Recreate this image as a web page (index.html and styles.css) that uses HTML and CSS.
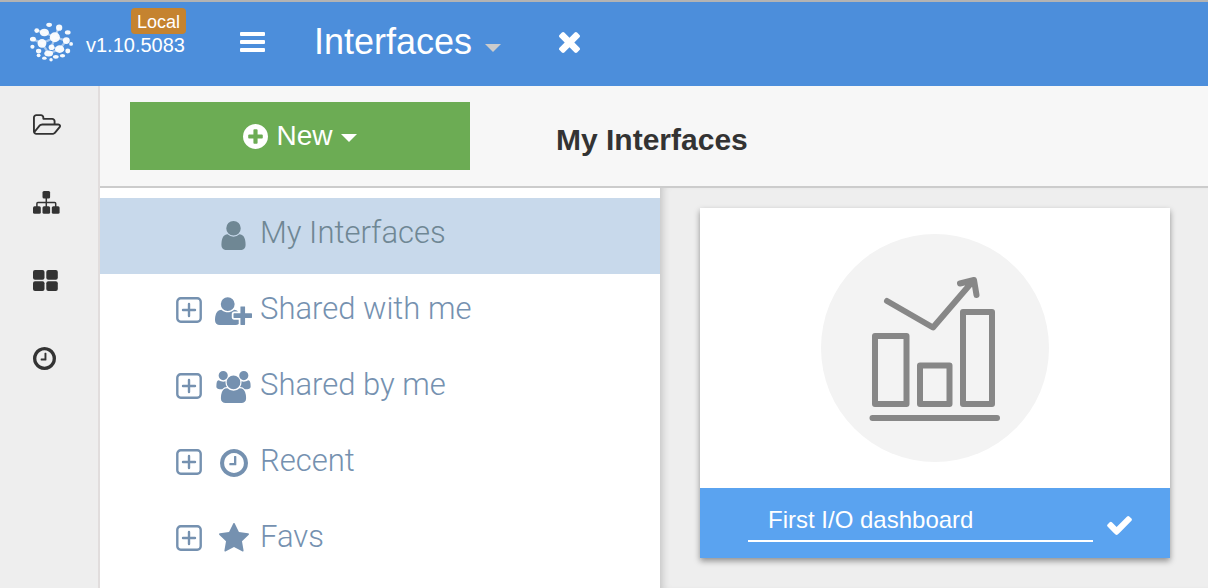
FILE: index.html
```html
<!DOCTYPE html>
<html lang="en">
<head>
<meta charset="utf-8">
<title>Interfaces</title>
<link rel="stylesheet" href="styles.css">
</head>
<body>
<svg class="sprite" aria-hidden="true">
  <symbol id="clock" viewBox="128 128 1536 1536"><path d="M1024 544v448q0 14-9 23t-23 9h-320q-14 0-23-9t-9-23v-64q0-14 9-23t23-9h224v-352q0-14 9-23t23-9h64q14 0 23 9t9 23zm416 352q0-148-73-273t-198-198-273-73-273 73-198 198-73 273 73 273 198 198 273 73 273-73 198-198 73-273zm224 0q0 209-103 385.5t-279.5 279.5-385.5 103-385.5-103-279.5-279.5-103-385.5 103-385.5 279.5-279.5 385.5-103 385.5 103 279.5 279.5 103 385.5z"/></symbol>
  <symbol id="expand" viewBox="0 0 26 26"><rect x="1.3" y="1.3" width="23.4" height="23.4" rx="3.4" fill="none" stroke="currentColor" stroke-width="2.4"/><path d="M13 7v12M7 13h12" stroke="currentColor" stroke-width="2.4" stroke-linecap="round"/></symbol>
</svg>
<header class="topbar">
  <a class="brand" href="#" aria-label="Home">
    <svg class="logo" viewBox="0 0 44 44" fill="currentColor">
      <g opacity=".95"><ellipse cx="19" cy="4" rx="3" ry="2.2"/><circle cx="29.500" cy="7" r="3.300"/><circle cx="6" cy="10" r="2.500"/><ellipse cx="14" cy="12" rx="4.800" ry="4"/><circle cx="25" cy="17" r="5.300"/><ellipse cx="38.500" cy="12" rx="3" ry="2.200"/><circle cx="37" cy="20.500" r="3.600"/><ellipse cx="2" cy="19" rx="3.200" ry="2.600"/><circle cx="11.500" cy="23.500" r="4.600"/><ellipse cx="1.500" cy="27" rx="2.200" ry="2"/><circle cx="21.500" cy="27.500" r="3"/><ellipse cx="30" cy="29.500" rx="4.800" ry="4"/><circle cx="42" cy="24" r="2"/><circle cx="38.500" cy="31.500" r="2.600"/><ellipse cx="8" cy="31.500" rx="2.800" ry="2.400"/><ellipse cx="18.500" cy="34" rx="4.600" ry="3.200"/><circle cx="8" cy="36" r="2"/><ellipse cx="26" cy="37.500" rx="3" ry="2"/><ellipse cx="33" cy="36.500" rx="2.800" ry="1.800"/><ellipse cx="14" cy="39" rx="2.400" ry="1.700"/><circle cx="21" cy="40.500" r="1.800"/></g>
      <path d="M14 12l11 5 12 3.500M25 17l4-10M11.500 23.500L25 17M30 29.500l7-9M18.500 34l11.500-4.500M11.500 23.500l7 10.500M2 19l9.500 4.500M6 10l8 2M21.500 27.500L25 17M21.500 27.500l8.500 2" fill="none" stroke="currentColor" stroke-width="2.400" opacity=".5"/>
    </svg>
    <span class="release"><span class="badge">Local</span><span class="version">v1.10.5083</span></span>
  </a>
  <button class="icon-button menu" aria-label="Menu"><svg class="icon-menu" viewBox="0 0 25 20" fill="currentColor"><rect width="25" height="4" rx="1"/><rect y="8" width="25" height="4" rx="1"/><rect y="16" width="25" height="4" rx="1"/></svg></button>
  <button class="section">Interfaces<span class="caret caret-muted"></span></button>
  <button class="icon-button" aria-label="Close"><svg class="icon-close" viewBox="302 302 1188 1188" fill="currentColor"><path d="M1490 1258q0 40-28 68l-136 136q-28 28-68 28t-68-28l-294-294-294 294q-28 28-68 28t-68-28l-136-136q-28-28-28-68t28-68l294-294-294-294q-28-28-28-68t28-68l136-136q28-28 68-28t68 28l294 294 294-294q28-28 68-28t68 28l136 136q28 28 28 68t-28 68l-294 294 294 294q28 28 28 68z"/></svg></button>
</header>
<div class="shell">
  <nav class="rail" aria-label="Main">
    <a href="#" aria-label="Files"><svg class="rail-folder" viewBox="64 128 1909 1408"><path d="M1845 931q0-35-53-35h-1088q-40 0-85.500 21.500t-71.500 52.500l-294 363q-18 24-18 40 0 35 53 35h1088q40 0 86-22t71-53l294-363q18-22 18-39zm-1141-163h768v-160q0-40-28-68t-68-28h-576q-40 0-68-28t-28-68v-64q0-40-28-68t-68-28h-320q-40 0-68 28t-28 68v853l256-315q44-53 116-87.500t140-34.500zm1269 163q0 62-46 120l-295 363q-43 53-116 87.500t-140 34.500h-1088q-92 0-158-66t-66-158v-960q0-92 66-158t158-66h320q92 0 158 66t66 158v32h544q92 0 158 66t66 158v160h192q54 0 99 24.500t67 70.500q15 32 15 68z"/></svg></a>
    <a href="#" aria-label="Structure"><svg class="rail-sitemap" viewBox="0 0 27 23"><rect x="9.500" width="7.600" height="7.600" rx="1.500"/><rect y="15.200" width="7.800" height="7.600" rx="1.500"/><rect x="9.500" y="15.200" width="7.600" height="7.600" rx="1.500"/><rect x="18.800" y="15.200" width="7.800" height="7.600" rx="1.500"/><path d="M13.300 7v9M3.900 16v-3.600q0-1 1-1h16.800q1 0 1 1V16" fill="none" stroke="currentColor" stroke-width="1.500"/></svg></a>
    <a href="#" aria-label="Interfaces"><svg class="rail-grid" viewBox="0 0 25 21"><rect width="11.500" height="9.700" rx="2"/><rect x="13.300" width="11.500" height="9.700" rx="2"/><rect y="11.300" width="11.500" height="9.700" rx="2"/><rect x="13.300" y="11.300" width="11.500" height="9.700" rx="2"/></svg></a>
    <a href="#" aria-label="History"><svg class="rail-clock"><use href="#clock"/></svg></a>
  </nav>
  <div class="workspace">
    <div class="toolbar">
      <button class="new"><svg class="icon-plus" viewBox="128 128 1536 1536" fill="currentColor"><path d="M1344 960v-128q0-26-19-45t-45-19h-256v-256q0-26-19-45t-45-19h-128q-26 0-45 19t-19 45v256h-256q-26 0-45 19t-19 45v128q0 26 19 45t45 19h256v256q0 26 19 45t45 19h128q26 0 45-19t19-45v-256h256q26 0 45-19t19-45zm320-64q0 209-103 385.500t-279.500 279.500-385.500 103-385.500-103-279.500-279.500-103-385.500 103-385.500 279.500-279.500 385.500-103 385.500 103 279.500 279.500 103 385.500z"/></svg><span>New</span><span class="caret"></span></button>
      <h1 class="title">My Interfaces</h1>
    </div>
    <div class="content">
      <ul class="tree">
        <li class="row selected"><span class="toggle"></span><a class="node" href="#"><span class="glyph"><svg class="glyph-user" viewBox="256 128 1280 1536"><path d="M1536 1399q0 109-62.500 187t-150.500 78h-854q-88 0-150.500-78t-62.500-187q0-85 8.500-160.500t31.500-152 58.500-131 94-89 134.500-34.500q131 128 313 128t313-128q76 0 134.500 34.500t94 89 58.500 131 31.500 152 8.500 160.500zm-256-887q0 159-112.500 271.500t-271.500 112.500-271.500-112.500-112.500-271.500 112.500-271.500 271.500-112.500 271.500 112.500 112.500 271.500z"/></svg></span><span class="label">My Interfaces</span></a></li>
        <li class="row"><button class="toggle" aria-label="Expand Shared with me"><svg><use href="#expand"/></svg></button><a class="node" href="#"><span class="glyph"><svg class="glyph-plus" viewBox="0 128 2048 1536"><path d="M704 896q-159 0-271.500-112.500t-112.500-271.500 112.500-271.500 271.500-112.500 271.500 112.500 112.500 271.500-112.500 271.500-271.500 112.500zm960 128h352q13 0 22.500 9.500t9.500 22.500v192q0 13-9.500 22.500t-22.500 9.500h-352v352q0 13-9.500 22.500t-22.500 9.500h-192q-13 0-22.500-9.500t-9.500-22.500v-352h-352q-13 0-22.500-9.500t-9.500-22.500v-192q0-13 9.500-22.500t22.500-9.500h352v-352q0-13 9.500-22.500t22.500-9.500h192q13 0 22.500 9.500t9.500 22.500v352zm-736 224q0 52 38 90t90 38h256v238q-68 50-171 50h-874q-121 0-194-69t-73-190q0-53 3.500-103.500t14-109 26.500-108.500 43-97.500 62-81 85.500-53.500 111.500-20q19 0 39 17 79 61 154.500 91.500t164.500 30.500 164.500-30.500 154.500-91.500q20-17 39-17 132 0 217 96h-223q-52 0-90 38t-38 90v192z"/></svg></span><span class="label">Shared with me</span></a></li>
        <li class="row"><button class="toggle" aria-label="Expand Shared by me"><svg><use href="#expand"/></svg></button><a class="node" href="#"><span class="glyph"><svg class="glyph-group" viewBox="0 0 1920 1792"><path d="M593 896q-162 5-265 128h-134q-82 0-138-40.500t-56-118.500q0-353 124-353 6 0 43.500 21t97.500 42.500 119 21.500q67 0 133-23-5 37-5 66 0 139 81 256zm1071 637q0 120-73 189.500t-194 69.500h-874q-121 0-194-69.500t-73-189.500q0-53 3.500-103.500t14-109 26.500-108.500 43-97.500 62-81 85.500-53.500 111.500-20q10 0 43 21.500t73 48 107 48 135 21.500 135-21.500 107-48 73-48 43-21.500q61 0 111.500 20t85.500 53.500 62 81 43 97.500 26.500 108.500 14 109 3.500 103.500zm-1024-1277q0 106-75 181t-181 75-181-75-75-181 75-181 181-75 181 75 75 181zm704 384q0 159-112.500 271.500t-271.500 112.500-271.500-112.500-112.500-271.500 112.500-271.500 271.500-112.500 271.500 112.500 112.500 271.500zm576 225q0 78-56 118.500t-138 40.500h-134q-103-123-265-128 81-117 81-256 0-29-5-66 66 23 133 23 59 0 119-21.500t97.500-42.500 43.500-21q124 0 124 353zm-128-609q0 106-75 181t-181 75-181-75-75-181 75-181 181-75 181 75 75 181z"/></svg></span><span class="label">Shared by me</span></a></li>
        <li class="row"><button class="toggle" aria-label="Expand Recent"><svg><use href="#expand"/></svg></button><a class="node" href="#"><span class="glyph"><svg class="glyph-clock"><use href="#clock"/></svg></span><span class="label">Recent</span></a></li>
        <li class="row"><button class="toggle" aria-label="Expand Favs"><svg><use href="#expand"/></svg></button><a class="node" href="#"><span class="glyph"><svg class="glyph-star" viewBox="64 59 1664 1560"><path d="M1728 647q0 22-26 48l-363 354 86 500q1 7 1 20 0 21-10.500 35.500t-30.500 14.500q-19 0-40-12l-449-236-449 236q-22 12-40 12-21 0-31.500-14.500t-10.500-35.500q0-6 2-20l86-500-364-354q-25-27-25-48 0-37 56-46l502-73 225-455q19-41 49-41t49 41l225 455 502 73q56 9 56 46z"/></svg></span><span class="label">Favs</span></a></li>
      </ul>
      <main class="gallery">
        <article class="card">
          <div class="preview">
            <svg class="chart" viewBox="0 0 228 228" fill="none" stroke="#878787" stroke-width="6" stroke-linejoin="round" stroke-linecap="round"><circle cx="114" cy="114" r="114" fill="#f3f3f3" stroke="none"/><path d="M54 102h31.500v68H54zM99 131.500h29.500V170H99zM142 78h29v92h-29zM51.500 184H176M66 67l46 26.500L152 47M139 49.500l14-3.500 2.500 15"/></svg>
          </div>
          <form class="card-footer">
            <input class="name" type="text" value="First I/O dashboard" aria-label="Interface name">
            <button class="confirm" type="button" aria-label="Save name"><svg viewBox="121 334 1550 1188" fill="currentColor"><path d="M1671 566q0 40-28 68l-724 724-136 136q-28 28-68 28t-68-28l-136-136-362-362q-28-28-28-68t28-68l136-136q28-28 68-28t68 28l294 295 656-657q28-28 68-28t68 28l136 136q28 28 28 68z"/></svg></button>
          </form>
        </article>
      </main>
    </div>
  </div>
</div>
</body>
</html>
```
FILE: styles.css
```css
* { box-sizing: border-box; }
body {
  margin: 0;
  min-height: 100vh;
  display: flex;
  flex-direction: column;
  font-family: "Liberation Sans", Arial, sans-serif;
  color: #333;
  background: #eee;
}
button {
  margin: 0;
  padding: 0;
  border: 0;
  background: none;
  color: inherit;
  font: inherit;
  cursor: pointer;
}
a { color: inherit; text-decoration: none; }
svg { display: block; flex: none; }
.sprite { position: absolute; width: 0; height: 0; }

.topbar {
  display: flex;
  align-items: center;
  height: 86px;
  padding: 0 30px 4px;
  border-top: 2px solid #b3b3b3;
  background: #4c8edb;
  color: #fff;
}
.brand { display: flex; align-items: center; gap: 12px; }
.logo { width: 44px; height: 42px; }
.release {
  display: flex;
  flex-direction: column;
  align-items: flex-end;
  padding-bottom: 20px;
}
.badge {
  padding: 4px 6px 2px;
  margin-right: -1px;
  border-radius: 4px;
  background: #c5832f;
  font-size: 18px;
  line-height: 20px;
}
.version { font-size: 20px; line-height: 22px; }
.icon-button { display: flex; }
.menu { margin-left: 55px; }
.icon-menu { width: 25px; height: 20px; }
.section {
  display: flex;
  align-items: center;
  gap: 13px;
  margin: 0 58px 0 49px;
  font-size: 36px;
  line-height: 42px;
}
.icon-close { width: 21px; height: 21px; }
.caret {
  border: 8px solid transparent;
  border-top-color: #fff;
  border-bottom: 0;
}
.caret-muted { margin-top: 12px; border-top-color: #ccc; }

.shell { flex: 1; display: flex; }
.rail {
  flex: none;
  width: 100px;
  border-right: 2px solid #e1dddd;
}
.rail a {
  display: flex;
  align-items: center;
  height: 78px;
  padding: 0 0 2px 33px;
}
.rail svg, .glyph svg { fill: currentColor; }
.rail-folder { width: 28px; height: 21px; }
.rail-sitemap { width: 27px; height: 23px; }
.rail-grid { width: 25px; height: 21px; }
.rail-clock { width: 23px; height: 23px; }

.workspace { flex: 1; min-width: 0; display: flex; flex-direction: column; }
.toolbar {
  display: flex;
  align-items: center;
  gap: 86px;
  height: 102px;
  padding: 0 30px;
  border-bottom: 2px solid #ccc;
  background: #f7f7f7;
}
.new {
  display: flex;
  align-items: center;
  justify-content: center;
  gap: 8px;
  width: 340px;
  height: 68px;
  background: #6cac54;
  color: #fff;
  font-size: 28px;
}
.icon-plus { width: 25px; height: 25px; }
.new .caret { margin-top: 4px; }
.title { margin: 8px 0 0; font-size: 30px; line-height: 36px; }

.content { flex: 1; display: flex; }
.tree {
  flex: none;
  width: 560px;
  margin: 0;
  padding: 10px 0 0;
  list-style: none;
  background: #fff;
  color: #7591b0;
}
.row {
  display: flex;
  align-items: center;
  gap: 13px;
  height: 76px;
  padding: 0 0 2px 76px;
}
.selected { background: #c8d9eb; color: #6f8794; }
.toggle { width: 26px; height: 26px; margin-bottom: 2px; }
.toggle svg { width: 26px; height: 26px; }
.node { display: flex; align-items: center; gap: 8px; }
.glyph { display: flex; justify-content: center; width: 37px; }
.glyph-user { width: 25px; height: 29px; }
.glyph-plus { width: 37px; height: 28px; }
.glyph-group { width: 35px; height: 32px; }
.glyph-clock { width: 28px; height: 28px; }
.glyph-star { width: 30px; height: 29px; margin-bottom: 4px; }
.label {
  padding-bottom: 4px;
  font-family: Roboto, "Liberation Sans", sans-serif;
  font-size: 31px;
  font-weight: 300;
  line-height: 38px;
}

.gallery {
  flex: 1;
  padding: 20px 38px 28px 40px;
  box-shadow: inset 8px 0 8px -6px rgba(0, 0, 0, 0.2);
}
.card {
  max-width: 470px;
  background: #fff;
  box-shadow: 0 3px 6px rgba(0, 0, 0, 0.4);
}
.preview { display: flex; justify-content: center; padding: 26px 0; }
.chart { width: 228px; height: 228px; }
.card-footer {
  display: flex;
  align-items: center;
  gap: 14px;
  height: 70px;
  padding: 0 38px 4px 48px;
  background: #5aa3f0;
  color: #fff;
}
.name {
  flex: 1;
  min-width: 0;
  height: 42px;
  padding: 0 20px;
  border: 0;
  border-bottom: 2px solid #fff;
  border-radius: 0;
  background: none;
  color: inherit;
  font: 24px "Liberation Sans", Arial, sans-serif;
  outline: 0;
}
.confirm svg { width: 25px; height: 19px; margin-top: 9px; }
```
